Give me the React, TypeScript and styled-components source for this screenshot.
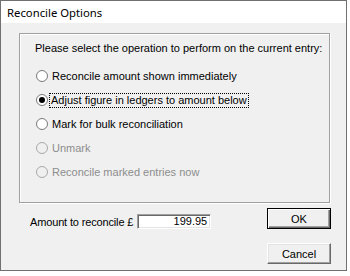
import React from "react";
import styled, { createGlobalStyle, css } from "styled-components";

const GlobalStyle = createGlobalStyle`
  html, body { margin: 0; padding: 0; background: #ffffff; }
  * { box-sizing: border-box; }
`;

const Window = styled.div`
  width: 347px;
  height: 271px;
  border: 1px solid #707070;
  background: #f0f0f0;
  display: flex;
  flex-direction: column;
  font-family: "Liberation Sans", Arial, sans-serif;
  font-size: 11px;
  color: #000;
`;

const TitleBar = styled.div`
  height: 22px;
  background: #ffffff;
  display: flex;
  align-items: center;
  padding-left: 6px;
  font-family: "Noto Sans", "Open Sans", sans-serif;
  font-size: 11.3px;
`;

const Body = styled.div`
  padding: 10px 15px 0 18px;
  display: flex;
  flex-direction: column;
`;

const GroupBox = styled.div`
  width: 311px;
  height: 170px;
  border: 1px solid #a0a0a0;
  box-shadow: inset 1px 1px 0 #ffffff, 1px 1px 0 #ffffff;
  padding: 8px 0 0 15px;
  display: flex;
  flex-direction: column;
`;

const Prompt = styled.div`
  height: 13px;
  line-height: 13px;
  margin-bottom: 9px;
  white-space: nowrap;
`;

const RadioRow = styled.div<{ $disabled?: boolean }>`
  height: 24px;
  display: flex;
  align-items: center;
  white-space: nowrap;
  color: ${(p) => (p.$disabled ? "#8d8d8d" : "#000")};
`;

const RadioCircle = styled.span<{ $checked?: boolean; $disabled?: boolean }>`
  position: relative;
  width: 12px;
  height: 12px;
  margin-left: 1px;
  border-radius: 50%;
  border: 1px solid ${(p) => (p.$disabled ? "#a8a8a8" : "#7a7a7a")};
  background: ${(p) => (p.$disabled ? "#f0f0f0" : "#ffffff")};
  flex: none;
  ${(p) =>
    p.$checked &&
    css`
      &::after {
        content: "";
        position: absolute;
        left: 2px;
        top: 2px;
        width: 6px;
        height: 6px;
        border-radius: 50%;
        background: #000;
      }
    `}
`;

const RadioLabel = styled.span<{ $focused?: boolean }>`
  line-height: 13px;
  padding: 0 1px;
  border: 1px dotted ${(p) => (p.$focused ? "#000" : "transparent")};
  margin-left: ${(p) => (p.$focused ? "1px" : "2px")};
`;

const BottomRow = styled.div`
  margin-top: 5px;
  display: flex;
  justify-content: space-between;
  align-items: flex-start;
`;

const AmountField = styled.div`
  padding: 6px 0 0 11px;
  display: flex;
  align-items: center;
  gap: 4px;
`;

const AmountLabel = styled.span`
  white-space: nowrap;
  letter-spacing: -0.15px;
`;

const AmountInput = styled.div`
  width: 74px;
  height: 15px;
  background: #fff;
  border-top: 1px solid #a0a0a0;
  border-left: 1px solid #a0a0a0;
  border-right: 1px solid #ffffff;
  border-bottom: 1px solid #ffffff;
  box-shadow: inset 1px 1px 0 #696969, inset -1px -1px 0 #e3e3e3;
  text-align: right;
  padding-right: 3px;
  line-height: 13px;
`;

const ButtonColumn = styled.div`
  display: flex;
  flex-direction: column;
  gap: 14px;
`;

const Button = styled.div<{ $default?: boolean }>`
  width: 64px;
  height: 21px;
  display: flex;
  align-items: center;
  justify-content: center;
  background: #f0f0f0;
  ${(p) =>
    p.$default
      ? css`
          border: 1px solid #000;
          box-shadow: inset 1px 1px 0 #ffffff, inset -1px -1px 0 #696969,
            inset -2px -2px 0 #a0a0a0;
        `
      : css`
          border-top: 1px solid #ffffff;
          border-left: 1px solid #ffffff;
          border-right: 1px solid #696969;
          border-bottom: 1px solid #696969;
          box-shadow: inset -1px -1px 0 #a0a0a0, inset 1px 1px 0 #e3e3e3;
        `}
`;

const options = [
  { label: "Reconcile amount shown immediately" },
  { label: "Adjust figure in ledgers to amount below", checked: true, focused: true },
  { label: "Mark for bulk reconciliation" },
  { label: "Unmark", disabled: true },
  { label: "Reconcile marked entries now", disabled: true },
];

export default function App() {
  return (
    <>
      <GlobalStyle />
      <Window>
        <TitleBar>Reconcile Options</TitleBar>
        <Body>
          <GroupBox>
            <Prompt>Please select the operation to perform on the current entry:</Prompt>
            {options.map((o) => (
              <RadioRow key={o.label} $disabled={o.disabled}>
                <RadioCircle $checked={o.checked} $disabled={o.disabled} />
                <RadioLabel $focused={o.focused}>{o.label}</RadioLabel>
              </RadioRow>
            ))}
          </GroupBox>
          <BottomRow>
            <AmountField>
              <AmountLabel>Amount to reconcile £</AmountLabel>
              <AmountInput>199.95</AmountInput>
            </AmountField>
            <ButtonColumn>
              <Button $default>OK</Button>
              <Button>Cancel</Button>
            </ButtonColumn>
          </BottomRow>
        </Body>
      </Window>
    </>
  );
}
